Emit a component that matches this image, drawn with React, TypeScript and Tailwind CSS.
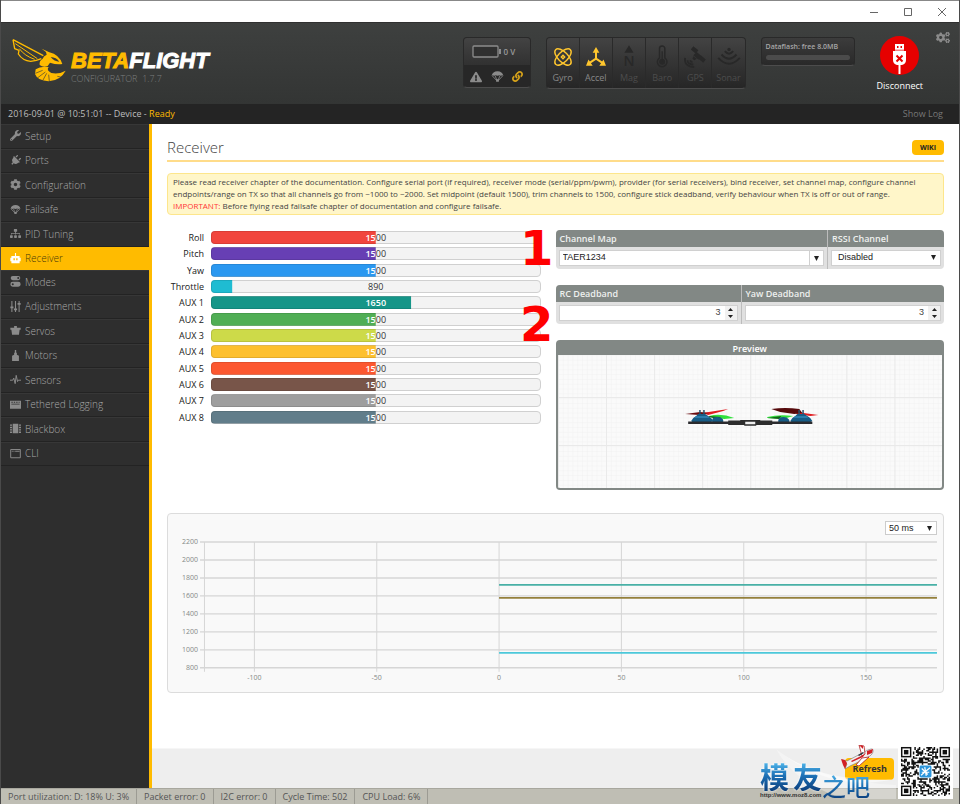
import { useState } from "react";
import type { ReactNode } from "react";
import { FaWrench, FaPlug, FaCog, FaCogs, FaSitemap, FaLink, FaExclamationTriangle } from "react-icons/fa";

const Parachute = ({ className = "" }: { className?: string }) => (
  <svg viewBox="0 0 16 16" fill="currentColor" className={className} aria-hidden="true">
    <path d="M1 6.500C1.400 3.600 4.200 1.500 8 1.500s6.600 2.100 7 5L11.800 7.200 10.500 6.500 8 7.200 5.500 6.500 4.200 7.200z" />
    <path d="M1.200 6.800 7 13M14.800 6.800 9 13M5 7l2.500 6M11 7l-2.500 6" stroke="currentColor" strokeWidth="1" fill="none" />
    <path d="M6.300 11.500h3.400V14.500H6.300z" />
  </svg>
);

const Glyph = ({ children }: { children: ReactNode }) => (
  <svg viewBox="0 0 16 16" fill="currentColor" className="w-[11px] h-[11px]" aria-hidden="true">
    {children}
  </svg>
);

const navItems = [
  { label: "Setup", icon: <FaWrench className="w-[11px] h-[11px]" /> },
  { label: "Ports", icon: <FaPlug className="w-[11px] h-[11px] rotate-45" /> },
  { label: "Configuration", icon: <FaCog className="w-[11px] h-[11px]" /> },
  { label: "Failsafe", icon: <Parachute className="w-[11px] h-[11px]" /> },
  { label: "PID Tuning", icon: <FaSitemap className="w-[11px] h-[11px]" /> },
  {
    label: "Receiver",
    icon: (
      <Glyph>
        <path fillRule="evenodd" d="M7.200 0h1.600v4.500H14V7h1.500v5H14v3H2v-3H.5V7H2V4.500h5.200zM5 7.500v3h2v-3zm4 0v3h2v-3z" />
      </Glyph>
    ),
  },
  {
    label: "Modes",
    icon: (
      <Glyph>
        <path fillRule="evenodd" d="M4 0h8a3 3 0 010 6H4a3 3 0 010-6zm8 1.500a1.500 1.500 0 100 3 1.500 1.500 0 000-3z" />
        <path fillRule="evenodd" d="M4 8.500h8a3.500 3.500 0 010 7H4a3.500 3.500 0 010-7zm0 2a1.500 1.500 0 100 3 1.500 1.500 0 000-3z" />
      </Glyph>
    ),
  },
  {
    label: "Adjustments",
    icon: (
      <Glyph>
        <path d="M2 0h1.500v16H2zM7.200 0h1.600v16H7.200zM12.500 0H14v16h-1.500zM.5 8h4.500v2.500H.5zM5.700 11h4.600v2.500H5.700zM11 3h4.500v2.500H11z" />
      </Glyph>
    ),
  },
  {
    label: "Servos",
    icon: (
      <Glyph>
        <path d="M6 1.500h4v2.500h5.500v3H14l-1 7H3L2 7H.5V4H6z" />
      </Glyph>
    ),
  },
  {
    label: "Motors",
    icon: (
      <Glyph>
        <path d="M7 0h2v4h1v3l3 1.500V16H3V8.500L6 7V4h1z" />
      </Glyph>
    ),
  },
  {
    label: "Sensors",
    icon: (
      <Glyph>
        <path d="M0 9h4l1.500-3L7.500 14 9 2l2 9 1-2h4" fill="none" stroke="currentColor" strokeWidth="1.400" />
      </Glyph>
    ),
  },
  {
    label: "Tethered Logging",
    icon: (
      <Glyph>
        <path fillRule="evenodd" d="M0 2.500h16V14H0zM2 7v1h12V7zm0-3v1.500h2V4zm3.500 0v1.500h2V4zM9 4v1.500h2V4zm3.500 0v1.500H14V4z" />
      </Glyph>
    ),
  },
  {
    label: "Blackbox",
    icon: (
      <Glyph>
        <path d="M4 1h8v14H4zM0 2h3v2H0zM0 5.500h3v2H0zM0 9h3v2H0zM0 12.500h3v2H0zM13 2h3v2h-3zM13 5.500h3v2h-3zM13 9h3v2h-3zM13 12.500h3v2h-3z" />
      </Glyph>
    ),
  },
  {
    label: "CLI",
    icon: (
      <Glyph>
        <path d="M1 2.200h14v12H1z" fill="none" stroke="currentColor" strokeWidth="1.400" />
        <path d="M2.500 4h1.500v1.500H2.500zM5 4h1.500v1.500H5zM7.500 4H14v1.500H7.500z" />
      </Glyph>
    ),
  },
];

const sensors = [
  {
    label: "Gyro",
    active: true,
    icon: (
      <g fill="none" stroke="currentColor" strokeWidth="1.700">
        <ellipse cx="12" cy="12" rx="12.500" ry="6" transform="rotate(45 12 12)" />
        <ellipse cx="12" cy="12" rx="12.500" ry="6" transform="rotate(-45 12 12)" />
        <path d="M12 10l2 2-2 2-2-2z" />
      </g>
    ),
  },
  {
    label: "Accel",
    active: true,
    icon: (
      <g fill="currentColor">
        <path d="M12 5v10M12 14L3 20M12 14l9 6" fill="none" stroke="currentColor" strokeWidth="2.400" />
        <path d="M12 0l4 7H8zM0 22.500l3-7.500 5 7.500zM24 22.500l-3-7.500-5 7.500z" />
      </g>
    ),
  },
  {
    label: "Mag",
    active: false,
    icon: (
      <g fill="currentColor">
        <path d="M12-2l5.500 9h-11z" />
        <text x="12" y="23" textAnchor="middle" fontSize="17" fontWeight="600" fontFamily="Open Sans, sans-serif">
          N
        </text>
      </g>
    ),
  },
  {
    label: "Baro",
    active: false,
    icon: (
      <g>
        <path d="M9 13V2a3.200 3.200 0 016.400 0v11a5.800 5.800 0 11-6.400 0z" fill="none" stroke="currentColor" strokeWidth="1.800" />
        <circle cx="12.200" cy="17.800" r="3.600" fill="currentColor" />
        <path d="M11.400 5h1.600v12h-1.600z" fill="currentColor" />
      </g>
    ),
  },
  {
    label: "GPS",
    active: false,
    icon: (
      <g fill="currentColor">
        <path d="M10-1l6 5-3 4-6-5zM19 10l6 5-3 4-6-5zM14 6l6 5-4 4-6-5zM10 11l4 3-3 2-2-2z" />
        <path d="M3 16q0 5 7 5M0 13q-1 11 11 11M6 16q1 2 3 2" fill="none" stroke="currentColor" strokeWidth="2.200" />
      </g>
    ),
  },
  {
    label: "Sonar",
    active: false,
    icon: (
      <g fill="none" stroke="currentColor" strokeWidth="2.400">
        <path d="M-1 13q13 14 26 0M3 9q9 10 18 0M7 5q5 6 10 0" />
        <circle cx="12" cy="3" r="2" fill="currentColor" stroke="none" />
      </g>
    ),
  },
];

const channels = [
  { name: "Roll", value: 1500, color: "bg-[#f1453d]" },
  { name: "Pitch", value: 1500, color: "bg-[#673fb4]" },
  { name: "Yaw", value: 1500, color: "bg-[#2b98f0]" },
  { name: "Throttle", value: 890, color: "bg-[#1fbcd2]" },
  { name: "AUX 1", value: 1650, color: "bg-[#159588]" },
  { name: "AUX 2", value: 1500, color: "bg-[#50ae55]" },
  { name: "AUX 3", value: 1500, color: "bg-[#cdda49]" },
  { name: "AUX 4", value: 1500, color: "bg-[#fdc02f]" },
  { name: "AUX 5", value: 1500, color: "bg-[#fc5830]" },
  { name: "AUX 6", value: 1500, color: "bg-[#785549]" },
  { name: "AUX 7", value: 1500, color: "bg-[#9e9e9e]" },
  { name: "AUX 8", value: 1500, color: "bg-[#617d8a]" },
];

const statusItems = ["Port utilization: D: 18% U: 3%", "Packet error: 0", "I2C error: 0", "Cycle Time: 502", "CPU Load: 6%"];

const MIN = 800;
const MAX = 2200;

function Logo() {
  return (
    <div className="flex items-start">
      <svg viewBox="36 116 162 132" className="w-[54px] h-[44px]" aria-hidden="true">
        <g fill="none" stroke="#ffbb00" strokeWidth="4" strokeLinejoin="round">
          <path d="M39 121L130 169M39 121L44 148 57 153 55 164Q68 184 92 186 110 184 124 178" />
          <path d="M46 133L112 178M58 148Q74 170 104 180" strokeWidth="3" />
        </g>
        <g fill="#ffbb00">
          <path d="M125 148L148 159Q178 166 187 194 170 197 150 190L143 200Q130 206 119 197 117 184 128 178 130 170 140 166L138 158z" />
          <path d="M107 210Q122 199 146 203 138 213 154 221 176 226 197 214 182 243 146 246 112 244 105 224z" />
        </g>
        <path d="M152 173Q169 174 178 187 163 187 152 173z" fill="#393b3a" />
        <g stroke="#393b3a" strokeWidth="2" fill="none">
          <path d="M106 222l22-9M112 236l24-18M128 244l12-22M148 246l-2-20" />
          <path d="M172 231l10 2" />
        </g>
      </svg>
      <div className="pl-[5px] pt-3">
        <div className="h-[22px] font-['Liberation_Sans',Arial,sans-serif] text-[22px] leading-[22px] font-bold italic text-white [-webkit-text-stroke:1px]">
          <span className="text-[#ffbb00]">BETA</span>FLIGHT
        </div>
        <div className="pt-[1px] text-[9px] leading-[11px] font-light text-[#7c7f7e] whitespace-pre">CONFIGURATOR{"  "}1.7.7</div>
      </div>
    </div>
  );
}

function BatteryBox() {
  return (
    <div className="w-[68px] h-[51px] rounded border border-[#292929] border-b-[#4c4c4c] overflow-hidden bg-[#272727]">
      <div className="h-[27px] flex items-center gap-[3px] pl-2 bg-gradient-to-b from-[#434343] to-[#313131]">
        <svg viewBox="0 0 29 13" className="w-[29px] h-[13px]" aria-hidden="true">
          <rect x="1" y="1" width="25" height="11" rx="1" fill="#303030" stroke="#8c8c8c" strokeWidth="1.300" />
          <path d="M27 4h2v5h-2z" fill="#8c8c8c" />
        </svg>
        <span className="text-[8px] font-semibold text-[#9a9a9a]">0 V</span>
      </div>
      <div className="h-[23px] flex items-center justify-around px-[2px] text-[#8b8b8b]">
        <FaExclamationTriangle className="w-3 h-3" />
        <Parachute className="w-[13px] h-[13px]" />
        <FaLink className="w-[11px] h-[11px] text-[#d7a31a]" />
      </div>
    </div>
  );
}

function SensorBox() {
  return (
    <ul className="w-[200px] h-[52px] flex rounded border border-[#292929] border-b-[#4c4c4c] overflow-hidden bg-gradient-to-b from-[#434343] to-[#262626]">
      {sensors.map((s) => (
        <li key={s.label} className={`flex-1 flex flex-col items-center pt-[9px] border-r border-[#2a2a2a] last:border-r-0 ${s.active ? "text-[#888]" : "text-[#4c4c4c]"}`}>
          <svg viewBox="0 0 24 24" className={`w-5 h-5 overflow-visible ${s.active ? "text-[#ffc62e]" : "text-[#282828]"}`} aria-hidden="true">
            {s.icon}
          </svg>
          <span className="pt-[5px] text-[9px] leading-3">{s.label}</span>
        </li>
      ))}
    </ul>
  );
}

function Header() {
  return (
    <header className="h-[82px] flex items-start pl-[11px] pr-[9px] bg-gradient-to-b from-[#3e403f] to-[#333534] border-t border-[#303030]">
      <div className="flex-1 pt-[15px]">
        <Logo />
      </div>
      <div className="flex gap-[15px] pt-[14px]">
        <BatteryBox />
        <SensorBox />
        <div className="w-[94px] h-[29px] rounded border border-[#292929] border-b-[#4c4c4c] bg-gradient-to-b from-[#3c3c3c] to-[#292929] px-1 pt-[3px]">
          <div className="text-[7px] leading-[11px] font-semibold text-[#a6a6a6] whitespace-nowrap">Dataflash: free 8.0MB</div>
          <div className="mt-[3px] h-[5px] rounded-sm bg-[#4b4b4b]" />
        </div>
      </div>
      <button className="ml-[22px] mt-[13px] flex flex-col items-center text-[9px] text-white">
        <span className="w-[39px] h-[39px] rounded-full bg-[#e60000] flex justify-center">
          <svg viewBox="0 0 39 39" className="w-[39px] h-[39px]" aria-hidden="true">
            <path d="M15 8h9v7h-9zM13 15h13v9q0 4-4 5h-1.500v9h-2V29H17q-4-1-4-5z" fill="#fff" />
            <path d="M17 10h1.500v2H17zM20.500 10H22v2h-1.500zM14.500 13.700h10v.8h-10z" fill="#e60000" />
            <path d="M16.500 19.500l6 6M22.500 19.500l-6 6" stroke="#e60000" strokeWidth="2" />
          </svg>
        </span>
        <span className="mt-[4px] leading-[13px]">Disconnect</span>
      </button>
      <button aria-label="Options" className="ml-[13px] mt-2 text-[#8a8a8a]">
        <FaCogs className="w-[14px] h-[13px]" />
      </button>
    </header>
  );
}

function Sidebar() {
  return (
    <nav className="w-[151px] shrink-0 bg-[#2e2e2e] border-r-[3px] border-[#ffbb00]">
      <ul className="h-[342px] flex flex-col">
        {navItems.map((item) => {
          const active = item.label === "Receiver";
          return (
            <li key={item.label} className={`flex-1 flex ${active ? "bg-[#ffbb00]" : "border-b border-[#232323] shadow-[inset_0_1px_0_#373737]"}`}>
              <a href="#" className={`flex-1 flex items-center gap-1 pl-[9px] text-[10px] leading-none ${active ? "text-[#4c3b08]" : "text-[#a8a8a8]"}`}>
                <span className={`w-[11px] flex justify-center ${active ? "text-white" : "text-[#8b8b8b]"}`}>{item.icon}</span>
                <span className="font-light">{item.label}</span>
              </a>
            </li>
          );
        })}
      </ul>
    </nav>
  );
}

function ChannelBars() {
  return (
    <ul className="h-[196px] flex flex-col">
      {channels.map((c) => {
        const hidden = 100 - ((c.value - MIN) / (MAX - MIN)) * 100;
        return (
          <li key={c.name} className="flex-1 flex gap-[7px]">
            <span className="w-[37px] text-right text-[9px] leading-[13px] text-[#202020]">{c.name}</span>
            <div className="flex-1 h-[13px] relative text-center text-[9px] leading-[13px] text-[#333]">
              <div className="h-[13px] rounded-sm border border-[#d0d0d0] bg-[#f3f3f3] leading-[11px]">{c.value}</div>
              <div aria-hidden="true" className={`absolute inset-0 rounded-sm border border-black/10 leading-[11px] font-semibold text-white ${c.color}`} style={{ clipPath: `inset(0 ${hidden}% 0 0)` }}>
                {c.value}
              </div>
            </div>
          </li>
        );
      })}
    </ul>
  );
}

const Arrow = ({ className = "h-[5px]" }: { className?: string }) => (
  <svg viewBox="0 0 6 5" preserveAspectRatio="none" className={`w-[5px] pointer-events-none ${className}`} aria-hidden="true">
    <path d="M0 0h6L3 5z" fill="#222" />
  </svg>
);

function Field({ id, label, className = "", children }: { id: string; label: string; className?: string; children: ReactNode }) {
  return (
    <div className={`border-l border-[#bcbcbc] first:border-l-0 bg-[#e0e0e0] ${className}`}>
      <label htmlFor={id} className="block h-[17px] px-1 text-[9px] leading-[17px] font-semibold text-[#eef0ee] bg-[#828885]">
        {label}
      </label>
      <div className="p-[3px]">{children}</div>
    </div>
  );
}

function NumberBox({ id, value, onChange }: { id: string; value: number; onChange: (v: number) => void }) {
  return (
    <div className="h-4 flex border border-[#d0d0d0] bg-white">
      <input
        id={id}
        type="number"
        value={value}
        onChange={(e) => onChange(Number(e.target.value))}
        className="flex-1 min-w-0 px-1 text-right text-[9px] text-[#444] font-['Liberation_Sans',Arial,sans-serif] outline-none [appearance:textfield] [&::-webkit-inner-spin-button]:appearance-none"
      />
      <div className="w-3 flex flex-col items-center justify-center gap-1 bg-[#f1f1f1]">
        <button aria-label="Increase" onClick={() => onChange(value + 1)}>
          <Arrow className="h-[3px] rotate-180 block" />
        </button>
        <button aria-label="Decrease" onClick={() => onChange(value - 1)}>
          <Arrow className="h-[3px] block" />
        </button>
      </div>
    </div>
  );
}

function Preview() {
  return (
    <div className="rounded border-2 border-[#828885] bg-[#828885] overflow-hidden">
      <h2 className="text-center text-[9px] leading-[13px] font-semibold text-white">Preview</h2>
      <svg viewBox="0 0 384 133" preserveAspectRatio="xMidYMid slice" className="block w-full h-[133px] bg-[#fafafa]" aria-label="Model preview">
        <defs>
          <pattern id="minor" width="4.800" height="4.800" patternUnits="userSpaceOnUse">
            <path d="M0 0H4.800M0 0V4.800" stroke="#f1f1f1" strokeWidth="1" />
          </pattern>
          <pattern id="major" x="0" y="42" width="48" height="48" patternUnits="userSpaceOnUse">
            <path d="M0 .5H48M.5 0V48" stroke="#e9e9e9" strokeWidth="1" />
          </pattern>
        </defs>
        <rect width="384" height="133" fill="url(#minor)" />
        <rect width="384" height="133" fill="url(#major)" />
        {/* quad seen from behind */}
        <path d="M151 61q12-3 25 2l-10 1-15-2zM209 62q12-3 26-1l-10 3-16-1z" fill="#32e03c" />
        <path d="M151 61l12 1-4 2-8-2zM209 63l14-2-2 3z" fill="#14641a" />
        <path d="M154 65q0-3 5-3t6 3v2h-11zM220 65q1-3 5-3t6 3v2h-11z" fill="#175c86" />
        <path d="M144 58l26-4-5 2-15 4z" fill="#e01c20" />
        <path d="M127 59l15-2 9 1-10 2-14-1z" fill="#6b0d10" />
        <path d="M238 57l22 3-8 1-14-2z" fill="#e01c20" />
        <path d="M213 54q14-2 28 0l3 4-8 1-14-2z" fill="#560a0c" />
        <path d="M141 55h1.500v4H141zM145 55h1.500v4H145zM240 55h1.500v4H240zM244 55h1.500v4H244z" fill="#27506c" />
        <path d="M133 66q1-3 5-5l2-2h7l3 2q4 2 5 5l-2 1h-19zM232 66q1-3 5-5l2-2h7l3 2q4 2 5 5l-2 1h-19z" fill="#175c86" />
        <path d="M138 61h11l2 2h-15zM237 61h11l2 2h-15z" fill="#2a7dad" />
        <path d="M130 66.500h124v2.500H130z" fill="#2b2b2e" />
        <path d="M170 65.500h12v-.5h20v.5h12v4.500h-16v.800h-12V70h-16z" fill="#2d2d2d" />
        <path d="M187 66.800h10v2.400h-10z" fill="#eee" />
      </svg>
    </div>
  );
}

function Chart() {
  const yTicks = [2200, 2000, 1800, 1600, 1400, 1200, 1000, 800];
  const xTicks = [-100, -50, 0, 50, 100, 150];
  const y = (v: number) => 8 + (2200 - v) * 0.09;
  const x = (v: number) => 331.5 + v * 2.45;
  return (
    <svg viewBox="0 1 776 149" className="block w-full" aria-label="Receiver channels over time">
      <g stroke="#d6d6d6" strokeWidth="1">
        {yTicks.map((t) => (
          <line key={t} x1="32" x2="770" y1={y(t)} y2={y(t)} strokeWidth="1.400" />
        ))}
        {xTicks.map((t) => (
          <line key={t} x1={x(t)} x2={x(t)} y1="8" y2="138" />
        ))}
        <line x1="36.500" x2="36.500" y1="8" y2="138" />
      </g>
      <g fill="#858988" fontSize="7">
        {yTicks.map((t) => (
          <text key={t} x="30" y={y(t) + 2.5} textAnchor="end">
            {t}
          </text>
        ))}
        {xTicks.map((t) => (
          <text key={t} x={x(t)} y="146" textAnchor="middle">
            {t}
          </text>
        ))}
      </g>
      <g strokeWidth="1.800">
        <line x1="331.500" x2="770" y1="51" y2="51" stroke="#48b0a6" />
        <line x1="331.500" x2="770" y1="64" y2="64" stroke="#94803c" />
        <line x1="331.500" x2="770" y1="119" y2="119" stroke="#4cc8da" />
      </g>
    </svg>
  );
}

function QrCode() {
  const n = 33;
  const cells: string[] = [];
  let seed = 7;
  for (let r = 0; r < n; r++) {
    for (let c = 0; c < n; c++) {
      seed = (seed * 1103515245 + 12345) % 2147483648;
      const corner = (r < 8 && c < 8) || (r < 8 && c > n - 9) || (r > n - 9 && c < 8);
      const middle = r > 11 && r < 21 && c > 11 && c < 21;
      if (!corner && !middle && seed / 2147483648 > 0.5) cells.push(`M${c} ${r}h1v1h-1z`);
    }
  }
  return (
    <svg viewBox="-2 -2 37 37" className="w-[55px] h-[55px] bg-white" role="img" aria-label="QR code">
      <path d={cells.join("")} fill="#111" />
      {[
        [0, 0],
        [26, 0],
        [0, 26],
      ].map(([cx, cy]) => (
        <g key={`${cx}-${cy}`}>
          <rect x={cx + 0.5} y={cy + 0.5} width="6" height="6" fill="none" stroke="#111" />
          <rect x={cx + 2} y={cy + 2} width="3" height="3" fill="#111" />
        </g>
      ))}
      <rect x="12.500" y="12.500" width="8" height="8" rx="1" fill="#2d96dc" />
      <path d="M13.500 19l6-5M14 14.500l4 4M16 13.500l1 6M14 17h5" stroke="#fff" strokeWidth=".8" />
    </svg>
  );
}

function Watermark() {
  const glyph = "bg-gradient-to-b from-[#55bdf0] via-[#1c70b5] to-[#0d3f7d] bg-clip-text text-transparent";
  return (
    <div className="absolute right-[6px] bottom-[5px] flex items-end gap-[28px] pointer-events-none font-['Noto_Sans_CJK_SC',sans-serif]">
      <div className="relative flex items-end">
        <svg viewBox="0 0 120 50" className="absolute left-4 bottom-0 w-[120px] h-[50px]" fill="#fff" aria-hidden="true">
          <path d="M0 0Q40 32 120 36V50H70Q20 36 0 0z" opacity=".35" />
          <path d="M8 6Q50 34 118 30 60 44 8 6z" opacity=".5" />
        </svg>
        <div className="relative">
          <div className="flex gap-1 text-[29px] leading-[30px] font-bold drop-shadow-[0_0_1px_#fff]">
            <span className={glyph}>模</span>
            <span className={glyph}>友</span>
          </div>
          <div className="text-[6px] leading-[8px] font-bold text-[#333] font-['Liberation_Sans',Arial,sans-serif]">http://www.moz8.com</div>
        </div>
        <div className={`relative text-[24px] leading-[26px] font-medium ${glyph}`}>之吧</div>
        <svg viewBox="0 0 34 25" className="absolute left-[81px] top-[-16px] w-[34px] h-[25px]" aria-hidden="true">
          <path d="M1 15l5 1L27 5q5-2 5 0 1 4-6 8L9 21l-5 3 2-5z" fill="#f1eeee" stroke="#777" strokeWidth=".6" />
          <path d="M18 0l5 1 1 8-3 2zM21 13l7-1-10 9-3-1z" fill="#fff" stroke="#b02020" strokeWidth=".8" />
          <path d="M0 14l4 1 2 3-2 6-2-4zM26 6l6-2-1 4-5 2zM10 16l14-7-2 3-11 5zM18 0l4 1v3z" fill="#d21f26" />
          <path d="M17 10l5-3 1 1-5 3z" fill="#29343c" />
        </svg>
      </div>
      <QrCode />
    </div>
  );
}

export default function App() {
  const [rcDeadband, setRcDeadband] = useState(3);
  const [yawDeadband, setYawDeadband] = useState(3);
  const [channelMap, setChannelMap] = useState("TAER1234");

  return (
    <div className="relative min-h-screen flex flex-col border-x border-[#4a4a4a] bg-white font-['Open_Sans',sans-serif]">
      {/* Window bar */}
      <div className="h-[22px] flex items-center justify-end gap-[26px] pr-[13px] border-t border-[#888] bg-white text-[#666]">
        <button aria-label="Minimize">
          <svg viewBox="0 0 8 8" className="w-2 h-2 block" stroke="currentColor">
            <path d="M0 4.500h8" />
          </svg>
        </button>
        <button aria-label="Maximize">
          <svg viewBox="0 0 8 8" className="w-2 h-2 block" stroke="currentColor" fill="none">
            <path d="M.5.5h7v7h-7z" />
          </svg>
        </button>
        <button aria-label="Close">
          <svg viewBox="0 0 8 8" className="w-2 h-2 block" stroke="currentColor">
            <path d="M0 0l8 8M8 0L0 8" />
          </svg>
        </button>
      </div>

      <Header />

      {/* Log */}
      <div className="h-5 flex items-center justify-between pl-[7px] pr-4 bg-[#242424] text-[9px] text-[#bdbdbd]">
        <p>
          2016-09-01 @ 10:51:01 -- Device - <span className="text-[#ffbb00]">Ready</span>
        </p>
        <button className="text-[#777]">Show Log</button>
      </div>

      <div className="flex-1 flex">
        <Sidebar />

        <main className="flex-1 min-w-0 flex flex-col">
          <div className="flex-1 px-[15px] pt-[13px]">
            <div className="flex items-center justify-between pb-[3px] border-b-2 border-[#ffdc8a]">
              <h1 className="text-[15px] leading-5 font-light text-[#444]">Receiver</h1>
              <a href="#" className="px-2 rounded-sm bg-[#ffbb00] text-[7px] leading-[15px] font-bold text-[#222]">
                WIKI
              </a>
            </div>

            <p className="mt-[11px] px-[5px] py-[2px] rounded-sm border border-[#fde68c] bg-[#fff6c9] text-[8px] leading-[12px] text-[#444]">
              Please read receiver chapter of the documentation. Configure serial port (if required), receiver mode (serial/ppm/pwm), provider (for serial receivers), bind receiver, set channel map, configure channel{" "}
              <br />
              endpoints/range on TX so that all channels go from ~1000 to ~2000. Set midpoint (default 1500), trim channels to 1500, configure stick deadband, verify behaviour when TX is off or out of range.
              <br />
              <span className="text-[#ff3535]">IMPORTANT:</span> Before flying read failsafe chapter of documentation and configure failsafe.
            </p>

            <div className="relative mt-[15px] flex gap-[15px]">
              <div className="flex-1 pt-[1px]">
                <ChannelBars />
              </div>

              <div className="w-1/2 flex flex-col">
                <div className="flex rounded overflow-hidden">
                  <Field id="channel-map" label="Channel Map" className="flex-1">
                    <div className="h-4 flex border border-[#d0d0d0] bg-white">
                      <input
                        id="channel-map"
                        value={channelMap}
                        onChange={(e) => setChannelMap(e.target.value)}
                        className="flex-1 min-w-0 px-[3px] text-[9px] text-[#222] outline-none font-['Liberation_Sans',Arial,sans-serif]"
                      />
                      <button aria-label="Channel map presets" className="w-[14px] flex items-center justify-center border-l border-[#d0d0d0]">
                        <Arrow />
                      </button>
                    </div>
                  </Field>
                  <Field id="rssi" label="RSSI Channel" className="w-[117px]">
                    <div className="relative">
                      <select id="rssi" className="block w-full h-4 px-[6px] appearance-none border border-[#d0d0d0] bg-white text-[9px] text-[#222] font-['Liberation_Sans',Arial,sans-serif]">
                        <option>Disabled</option>
                      </select>
                      <Arrow className="h-[5px] absolute right-[5px] top-[5px]" />
                    </div>
                  </Field>
                </div>

                <div className="mt-4 flex rounded overflow-hidden">
                  <Field id="rc-deadband" label="RC Deadband" className="w-[185px]">
                    <NumberBox id="rc-deadband" value={rcDeadband} onChange={setRcDeadband} />
                  </Field>
                  <Field id="yaw-deadband" label="Yaw Deadband" className="flex-1">
                    <NumberBox id="yaw-deadband" value={yawDeadband} onChange={setYawDeadband} />
                  </Field>
                </div>

                <div className="mt-4">
                  <Preview />
                </div>
              </div>

              {/* Step markers */}
              <div className="absolute left-[353px] -top-[6px] flex flex-col gap-[28px] text-[48px] leading-none font-bold text-[#ff0000] font-['DejaVu_Sans',Verdana,sans-serif] pointer-events-none">
                <span>1</span>
                <span>2</span>
              </div>
            </div>

            <div className="mt-[23px] rounded-sm border border-[#dcdcdc] bg-[#f9f9f9]">
              <div className="flex justify-end pt-[7px] pr-[6px]">
                <div className="relative">
                  <select aria-label="Refresh rate" className="block w-[52px] h-[14px] px-[3px] appearance-none border border-[#ccc] bg-white text-[9px] leading-3 text-[#222] font-['Liberation_Sans',Arial,sans-serif]">
                    <option>50 ms</option>
                  </select>
                  <Arrow className="h-[5px] absolute right-[5px] top-[5px]" />
                </div>
              </div>
              <Chart />
              <div className="h-2" />
            </div>
          </div>

          <div className="h-10 flex justify-end items-center pr-[65px] bg-[#eeeeee] border-t border-[#f6f6f6]">
            <button className="h-[22px] px-[7px] rounded-sm bg-[#ffbb00] text-[9px] font-bold text-[#333]">Refresh</button>
          </div>
        </main>
      </div>

      <footer className="h-4 flex items-center bg-[#bfbeb4] border-t border-[#a8a79e] text-[9px] leading-[15px] text-[#555]">
        {statusItems.map((s) => (
          <span key={s} className="px-[7px] border-r border-[#9c9b93] whitespace-nowrap">
            {s}
          </span>
        ))}
      </footer>

      <Watermark />
    </div>
  );
}
